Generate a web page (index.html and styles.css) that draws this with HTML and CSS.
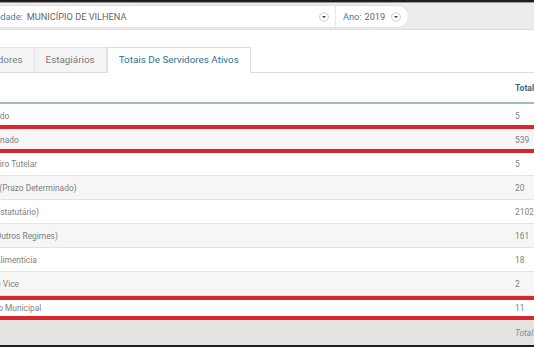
FILE: index.html
```html
<!DOCTYPE html>
<html lang="pt-BR">
<head>
<meta charset="utf-8">
<title>Totais De Servidores Ativos</title>
<link rel="stylesheet" href="styles.css">
</head>
<body>
<div class="frame">
  <div class="filterbar">
    <div class="pill">
      <div class="seg seg-unit">
        <span class="lbl">Unidade:</span>
        <span class="val">MUNICÍPIO DE VILHENA</span>
        <span class="caret"><svg width="10" height="10" viewBox="0 0 10 10"><circle cx="5" cy="5" r="4.4" fill="#fff" stroke="#c9c9c9" stroke-width="0.9"/><path d="M3 4.1 L7 4.1 L5 6.3 Z" fill="#4a4a4a"/></svg></span>
      </div>
      <div class="seg seg-year">
        <span class="lbl">Ano:</span>
        <span class="val">2019</span>
        <span class="caret"><svg width="10" height="10" viewBox="0 0 10 10"><circle cx="5" cy="5" r="4.4" fill="#fff" stroke="#c9c9c9" stroke-width="0.9"/><path d="M3 4.1 L7 4.1 L5 6.3 Z" fill="#4a4a4a"/></svg></span>
      </div>
    </div>
  </div>

  <div class="content">
    <div class="tabs">
      <div class="tab">Servidores</div>
      <div class="tab">Estagiários</div>
      <div class="tab active">Totais De Servidores Ativos</div>
    </div>

    <div class="table-wrap">
      <table class="totals">
        <colgroup><col class="c1"><col class="c2"></colgroup>
        <thead>
          <tr><th>Vínculo</th><th>Total</th></tr>
        </thead>
        <tbody>
          <tr><td>Requisitado</td><td>5</td></tr>
          <tr><td>Comissionado</td><td>539</td></tr>
          <tr><td>Conselheiro Tutelar</td><td>5</td></tr>
          <tr><td>Contrato (Prazo Determinado)</td><td>20</td></tr>
          <tr><td>Efetivo (Estatutário)</td><td>2102</td></tr>
          <tr><td>Efetivo (Outros Regimes)</td><td>161</td></tr>
          <tr><td>Pensão Alimentícia</td><td>18</td></tr>
          <tr><td>Prefeito e Vice</td><td>2</td></tr>
          <tr><td>Secretário Municipal</td><td>11</td></tr>
        </tbody>
        <tfoot>
          <tr><td></td><td>Total</td></tr>
        </tfoot>
      </table>
      <div class="mark mark-1"></div>
      <div class="mark mark-2"></div>
    </div>
  </div>
  <div class="bottom-line"></div>
</div>
</body>
</html>
```

FILE: styles.css
```css
html, body {
  margin: 0;
  padding: 0;
  overflow: hidden;
  background: #fff;
  font-family: Roboto, "Liberation Sans", sans-serif;
}

.frame {
  width: 534px;
  border-top: 2px solid #1f1f1f;
}

.filterbar {
  height: 28px;
  box-sizing: border-box;
  padding-top: 2px;
  background: #ececec;
  border-top: 1px solid #9a9a9a;
  border-bottom: 1px solid #dcdcdc;
  display: flex;
  align-items: flex-start;
}

.pill {
  margin-left: -22px;
  height: 23px;
  box-sizing: border-box;
  background: #fff;
  border: 1px solid #e2e2e2;
  border-radius: 12px;
  display: flex;
  align-items: stretch;
  font-size: 9.2px;
}

.seg {
  display: flex;
  align-items: center;
  box-sizing: border-box;
}

.seg-unit {
  width: 357px;
  padding: 0 6px 0 8px;
  border-right: 1px solid #e6e6e6;
}

.seg-unit .val {
  flex: 1;
  margin-left: 4px;
}

.seg-year {
  padding: 0 7px 0 7px;
}

.seg-year .val {
  margin-left: 3px;
  margin-right: 6px;
}

.lbl {
  color: #3b7fa6;
}

.val {
  color: #666;
}

.caret {
  display: flex;
  width: 10px;
  height: 10px;
}

.content {
  padding-top: 17px;
}

.tabs {
  display: flex;
  margin-left: -35px;
  height: 25px;
  border-bottom: 1px solid #dddddd;
  font-size: 9.9px;
}

.tab {
  padding: 0 11px;
  line-height: 24px;
  color: #7a7a7a;
  background: #f4f4f4;
  border: 1px solid #e4e4e4;
  border-bottom: none;
  border-left: none;
}

.tab.active {
  background: #fff;
  color: #2f6f8d;
  border: 1px solid #dddddd;
  border-bottom: none;
  height: 25px;
  margin-bottom: -1px;
  position: relative;
}

.table-wrap {
  position: relative;
  margin-left: -41px;
  width: 640px;
}

.totals {
  width: 640px;
  table-layout: fixed;
  border-collapse: collapse;
  font-size: 8.4px;
}

.totals col.c1 {
  width: 550px;
}

.totals th {
  height: 29px;
  padding: 0 6px;
  text-align: left;
  color: #3a6d80;
  font-weight: 700;
  font-size: 8.6px;
  border-bottom: 2px solid #a2bbc3;
}

.totals td {
  height: 23px;
  padding: 0 6px;
  color: #7f7f7f;
  border-bottom: 1px solid #e3e3e3;
  white-space: nowrap;
}

.totals tbody tr:nth-child(even) td {
  background: #f6f6f6;
}

.totals tfoot td {
  height: 25px;
  background: #e5e3e1;
  border-bottom: none;
  font-style: italic;
  color: #8a8a8a;
}

.mark {
  position: absolute;
  left: -10px;
  right: -10px;
  border-top: 4px solid #d7262d;
  border-bottom: 4px solid #d7262d;
  box-sizing: border-box;
}

.mark-1 {
  top: 52px;
  height: 28px;
}

.mark-2 {
  top: 223px;
  height: 24px;
}

.bottom-line {
  height: 2px;
  background: #1f1f1f;
}
```
